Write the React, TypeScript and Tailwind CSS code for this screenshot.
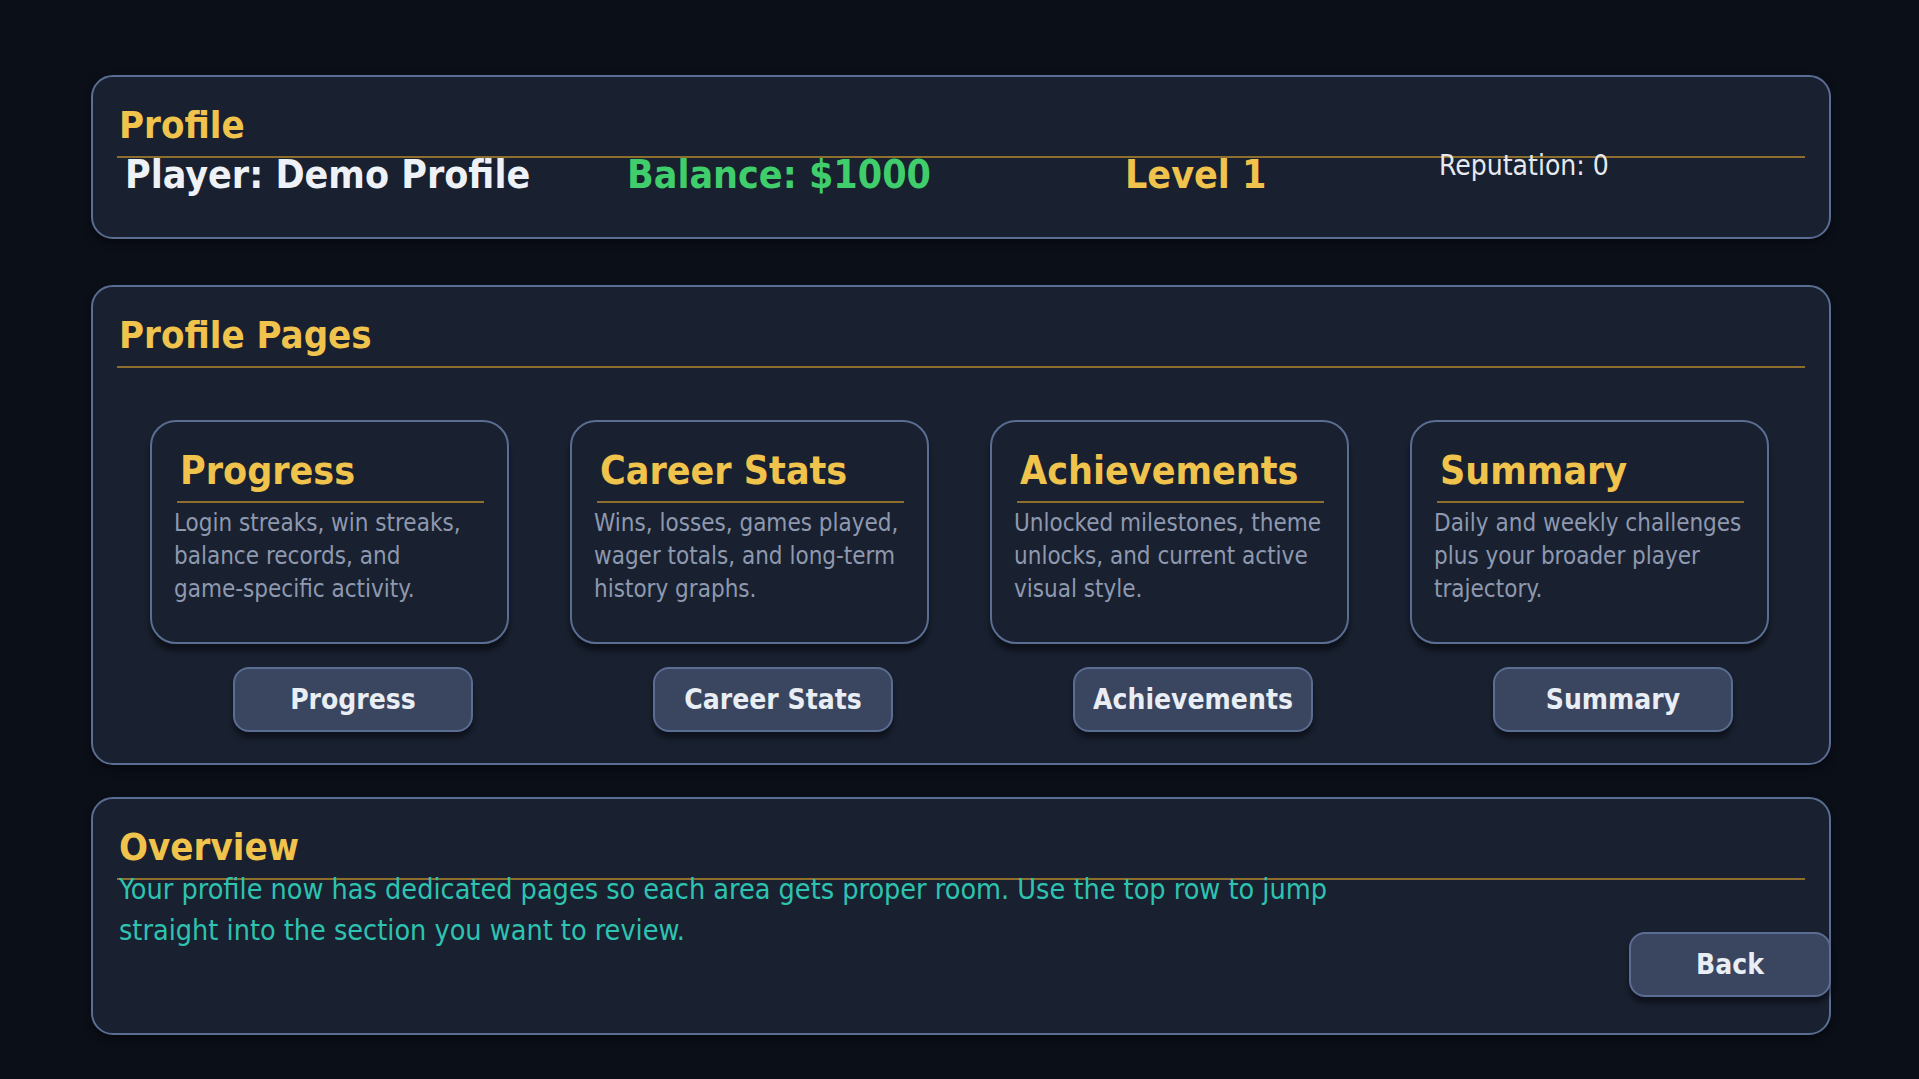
const font = "font-['DejaVu_Sans_Condensed','DejaVu_Sans',sans-serif] font-stretch-condensed";

const pages = [
  {
    title: "Progress",
    text: (
      <>
        Login streaks, win streaks, balance records, and <span className="whitespace-nowrap">game-specific</span> activity.
      </>
    ),
  },
  {
    title: "Career Stats",
    text: <>Wins, losses, games played, wager totals, and long-term history graphs.</>,
  },
  {
    title: "Achievements",
    text: <>Unlocked milestones, theme unlocks, and current active visual style.</>,
  },
  {
    title: "Summary",
    text: <>Daily and weekly challenges plus your broader player trajectory.</>,
  },
];

function PanelTitle({ children }: { children: string }) {
  return (
    <div>
      <h2 className="ml-[2px] text-[38px] leading-none font-bold text-[#efc34c]">{children}</h2>
      <div className="mt-[12px] h-[2px] bg-[#8d6e2c]" />
    </div>
  );
}

function GameButton({
  label,
  width = "w-[240px]",
  className = "",
}: {
  label: string;
  width?: string;
  className?: string;
}) {
  return (
    <button
      className={`flex h-[65px] items-center justify-center rounded-[16px] border-2 border-[#5b6d92] bg-[#3a4560] text-[28px] font-bold text-[#e9edf4] shadow-[0_6px_5px_rgba(5,8,14,0.55)] ${width} ${className}`}
    >
      {label}
    </button>
  );
}

export default function App() {
  return (
    <div className={`min-h-screen bg-[#0b0f18] pt-[75px] pr-[88px] pl-[91px] ${font}`}>
      {/* header panel */}
      <section className="h-[164px] rounded-[22px] border-2 border-[#5a6d93] bg-[#19202f] px-[24px] pt-[29px] shadow-[0_4px_8px_rgba(0,0,0,0.45)]">
        <PanelTitle>Profile</PanelTitle>
        <div className="-mt-[3px] flex items-start pl-[8px] text-[39px] leading-none font-bold">
          <span className="w-[502px] text-[#eef1f6]">Player: Demo Profile</span>
          <span className="w-[498px] text-[#3fce6b]">Balance: $1000</span>
          <span className="w-[314px] text-[#efc34c]">Level 1</span>
          <span className="-mt-[3px] text-[28px] font-normal text-[#e6e9f0]">Reputation: 0</span>
        </div>
      </section>

      {/* pages panel */}
      <section className="mt-[46px] h-[480px] rounded-[22px] border-2 border-[#5a6d93] bg-[#19202f] px-[24px] pt-[29px] shadow-[0_4px_8px_rgba(0,0,0,0.45)]">
        <PanelTitle>Profile Pages</PanelTitle>
        <div className="mt-[52px] ml-[33px] flex gap-[61px]">
          {pages.map((p) => (
            <div key={p.title} className="flex w-[359px] flex-col">
              <div className="h-[224px] rounded-[26px] border-2 border-[#5a6d93] bg-[#19202f] pt-[29px] pr-[23px] pl-[25px] shadow-[0_7px_5px_rgba(5,8,14,0.6)]">
                <h3 className="ml-[3px] text-[39px] leading-none font-bold text-[#efc34c]">{p.title}</h3>
                <div className="mt-[11px] h-[2px] bg-[#8d6e2c]" />
                <p className="mt-[4px] -ml-[3px] text-[24px] leading-[33px] text-[#8e99b0]">{p.text}</p>
              </div>
              <GameButton label={p.title} className="mt-[23px] ml-[83px]" />
            </div>
          ))}
        </div>
      </section>

      {/* overview panel */}
      <section className="mt-[32px] h-[238px] rounded-[22px] border-2 border-[#5a6d93] bg-[#19202f] pt-[29px] pl-[24px] shadow-[0_4px_8px_rgba(0,0,0,0.45)]">
        <div className="mr-[24px]">
          <PanelTitle>Overview</PanelTitle>
        </div>
        <div className="-mt-[11px] flex items-start justify-between">
          <p className="ml-[2px] w-[1250px] text-[28.5px] leading-[41px] text-[#2ec3b1]">
            Your profile now has dedicated pages so each area gets proper room. Use the top row to jump
            straight into the section you want to review.
          </p>
          <GameButton label="Back" width="w-[202px]" className="mt-[63px] -mr-[2px]" />
        </div>
      </section>
    </div>
  );
}
